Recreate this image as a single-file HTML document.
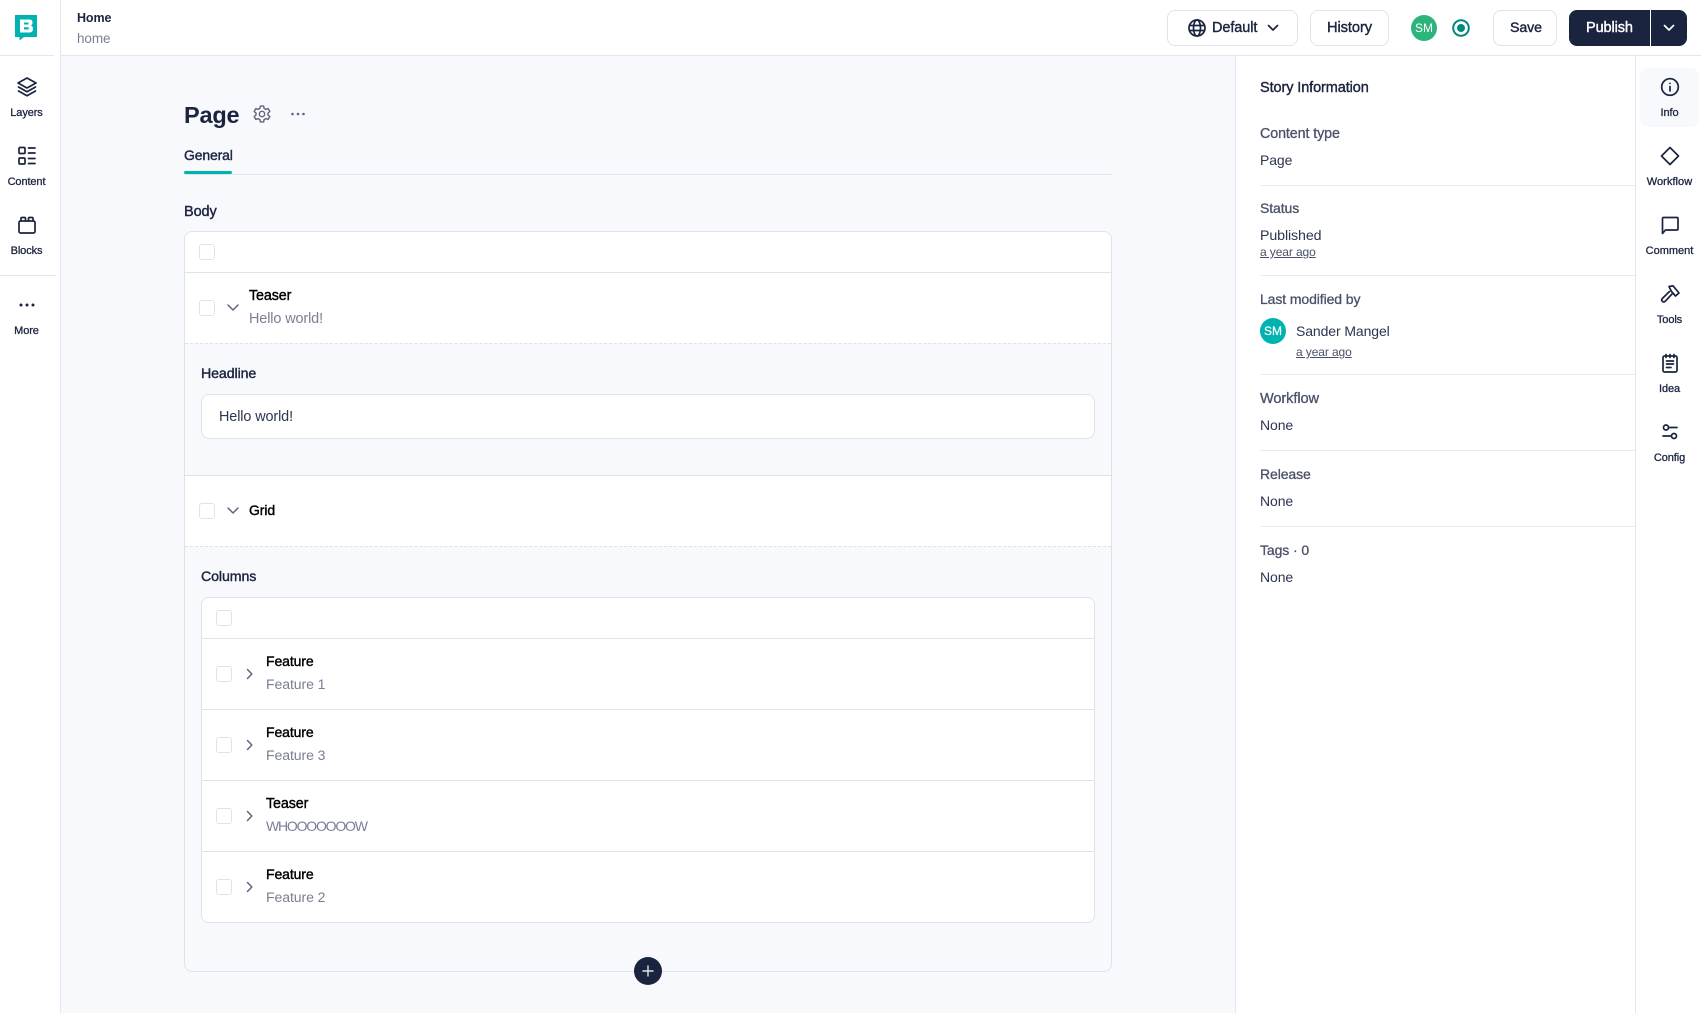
<!DOCTYPE html>
<html><head><meta charset="utf-8"><style>
*{box-sizing:border-box}
html,body{margin:0;padding:0;width:1701px;height:1013px;overflow:hidden;background:#fff}
body{font-family:"Liberation Sans",sans-serif;color:#1b243f;position:relative;font-size:14px}
.a{position:absolute}
.t{position:absolute;line-height:20px;white-space:nowrap;letter-spacing:-.1px}
.m{-webkit-text-stroke:.4px currentColor}
.l{font-size:11px;text-align:center;width:60px;-webkit-text-stroke:.3px currentColor;letter-spacing:-.1px}
.g{color:#7a7f95;font-size:14.3px}
.d{color:#4b5068}
.k{color:#000}
.cb{position:absolute;width:16px;height:16px;border:1px solid #dfe3e8;border-radius:3px;background:#fff}
.hl{position:absolute;height:1px;background:#dfe3e8}
.btn{position:absolute;top:10px;height:36px;border:1px solid #dfe3e8;border-radius:8px;background:#fff}
svg{position:absolute;overflow:visible}
.ic{fill:none;stroke:#1b243f;stroke-width:1.7;stroke-linecap:round;stroke-linejoin:round}
.ch{fill:none;stroke:#5f6580;stroke-width:1.5;stroke-linecap:round;stroke-linejoin:round}
</style></head><body>
<div class="a" style="left:61px;top:56px;width:1174px;height:957px;background:#f8f9fc"></div>
<div class="a" style="left:60px;top:0;width:1px;height:1013px;background:#e3e6f0"></div>
<div class="a" style="left:60px;top:55px;width:1641px;height:1px;background:#e3e6f0"></div>
<div class="a" style="left:0;top:55px;width:54px;height:1px;background:#e3e6f0"></div>
<div class="a" style="left:0;top:275px;width:56px;height:1px;background:#e3e6f0"></div>
<div class="a" style="left:1235px;top:56px;width:1px;height:957px;background:#e3e6f0"></div>
<div class="a" style="left:1635px;top:56px;width:1px;height:957px;background:#e3e6f0"></div>

<svg style="left:15px;top:15px" width="22" height="26" viewBox="0 0 22 26"><path d="M0 0H22V22H9L4.500 25.500V22H0Z" fill="#00b3b0"/><path d="M5 4.500H14.500Q17.500 4.500 17.500 7.500Q17.500 9.800 15.800 10.500Q18 11.200 18 13.800Q18 17.500 14.500 17.500H5Z" fill="#fff"/><path d="M9 7.500H13.500V9.500H9ZM9 12.300H13.700V14.500H9Z" fill="#00b3b0"/></svg>

<svg class="ic" style="left:16px;top:76px" width="22" height="22" viewBox="0 0 22 22"><path d="M11 2 20 7 11 12 2 7Z"/><path d="M2.500 11 11 15.800 19.500 11"/><path d="M2.500 15 11 19.800 19.500 15"/></svg>
<div class="t l" style="left:-3.500px;top:103px">Layers</div>
<svg class="ic" style="left:16px;top:145px" width="22" height="22" viewBox="0 0 22 22"><rect x="3" y="2.500" width="6" height="6" rx="1"/><rect x="3" y="13" width="6" height="6" rx="1"/><path d="M12.500 3H19M12.500 8H19M12.500 13.500H19M12.500 18.500H19"/></svg>
<div class="t l" style="left:-3.500px;top:172px">Content</div>
<svg class="ic" style="left:16px;top:214px" width="22" height="22" viewBox="0 0 22 22"><rect x="3" y="7" width="16" height="12" rx="1.500"/><path d="M5 7V4.500Q5 3.500 6 3.500H8.500Q9.500 3.500 9.500 4.500V7M12.500 7V4.500Q12.500 3.500 13.500 3.500H16Q17 3.500 17 4.500V7"/></svg>
<div class="t l" style="left:-3.500px;top:241px">Blocks</div>
<svg style="left:16px;top:300px" width="22" height="10" viewBox="0 0 22 10"><circle cx="5" cy="5" r="1.500" fill="#1b243f"/><circle cx="11" cy="5" r="1.500" fill="#1b243f"/><circle cx="17" cy="5" r="1.500" fill="#1b243f"/></svg>
<div class="t l" style="left:-3.500px;top:321px">More</div>

<div class="t" style="left:77px;top:8px;font-size:12.500px;font-weight:700;letter-spacing:-.1px">Home</div>
<div class="t g" style="left:77px;top:28.500px;font-size:13.500px">home</div>

<div class="btn" style="left:1167px;width:131px"></div>
<svg class="ic" style="left:1187px;top:18px" width="20" height="20" viewBox="0 0 20 20" stroke-width="1.500"><circle cx="10" cy="10" r="8"/><ellipse cx="10" cy="10" rx="3.500" ry="8"/><path d="M2.500 7.500H17.500M2.500 12.500H17.500"/></svg>
<div class="t m" style="left:1212px;top:17.500px;font-size:14.500px">Default</div>
<svg class="ic" style="left:1266px;top:23px" width="14" height="10" viewBox="0 0 14 10"><path d="M2.500 2.500 7 7 11.500 2.500"/></svg>
<div class="btn" style="left:1310px;width:79px"></div>
<div class="t m" style="left:1327px;top:17.500px;font-size:14.700px">History</div>
<div class="a" style="left:1411px;top:15px;width:26px;height:26px;border-radius:50%;background:#2db47d;color:#fff;font-size:12px;line-height:27px;text-align:center">SM</div>
<svg style="left:1451px;top:18px" width="20" height="20" viewBox="0 0 20 20"><circle cx="10" cy="10" r="7.800" fill="none" stroke="#00897f" stroke-width="2"/><circle cx="10" cy="10" r="4" fill="#00897f"/></svg>
<div class="btn" style="left:1493px;width:64px"></div>
<div class="t m" style="left:1510px;top:17.500px;font-size:14.200px">Save</div>
<div class="a" style="left:1569px;top:10px;width:118px;height:36px;border-radius:8px;background:#1b243f"></div>
<div class="a" style="left:1650px;top:10px;width:1px;height:36px;background:#fff"></div>
<div class="t m" style="left:1586px;top:17.500px;font-size:14.500px;color:#fff">Publish</div>
<svg style="left:1662px;top:23px" width="14" height="10" viewBox="0 0 14 10"><path d="M2.500 2.500 7 7 11.500 2.500" fill="none" stroke="#fff" stroke-width="1.700" stroke-linecap="round" stroke-linejoin="round"/></svg>

<div class="t" style="left:184px;top:102px;font-size:23.500px;line-height:26px;font-weight:700;letter-spacing:-.2px">Page</div>
<svg style="left:252px;top:104px" width="20" height="20" viewBox="0 0 24 24" fill="none" stroke="#5f6580" stroke-width="1.700" stroke-linejoin="round"><path d="M10 2.500H14L14.500 5.300 16.700 6.500 19.400 5.500 21.400 9 19.200 10.800V13.200L21.400 15 19.400 18.500 16.700 17.500 14.500 18.700 14 21.500H10L9.500 18.700 7.300 17.500 4.600 18.500 2.600 15 4.800 13.200V10.800L2.600 9 4.600 5.500 7.300 6.500 9.500 5.300Z"/><circle cx="12" cy="12" r="3.200"/></svg>
<svg style="left:290px;top:109px" width="16" height="10" viewBox="0 0 16 10"><circle cx="2.500" cy="5" r="1.300" fill="#5f6580"/><circle cx="8" cy="5" r="1.300" fill="#5f6580"/><circle cx="13.500" cy="5" r="1.300" fill="#5f6580"/></svg>
<div class="t m" style="left:184px;top:145px;font-size:14px;letter-spacing:-.15px">General</div>
<div class="hl" style="left:184px;top:174px;width:928px"></div>
<div class="a" style="left:184px;top:171px;width:48px;height:3px;background:#00b3b0;border-radius:2px"></div>
<div class="t m" style="left:184px;top:202px;font-size:14.500px">Body</div>

<div class="a" style="left:184px;top:231px;width:928px;height:741px;border:1px solid #dfe3e8;border-radius:8px"></div>
<div class="a" style="left:185px;top:232px;width:926px;height:111px;background:#fff;border-radius:7px 7px 0 0"></div>
<div class="a" style="left:185px;top:475px;width:926px;height:71px;background:#fff"></div>
<div class="hl" style="left:185px;top:272px;width:926px"></div>
<div class="a" style="left:185px;top:343px;width:926px;height:0;border-top:1px dashed #dfe3e8"></div>
<div class="hl" style="left:185px;top:475px;width:926px"></div>
<div class="a" style="left:185px;top:546px;width:926px;height:0;border-top:1px dashed #dfe3e8"></div>

<div class="cb" style="left:199px;top:244px"></div>
<div class="cb" style="left:199px;top:300px"></div>
<svg class="ch" style="left:226px;top:303px" width="14" height="10" viewBox="0 0 14 10"><path d="M2 2 7 7 12 2"/></svg>
<div class="t m k" style="left:249px;top:286px;font-size:14.300px">Teaser</div>
<div class="t g" style="left:249px;top:309px;font-size:14.400px">Hello world!</div>
<div class="t m" style="left:201px;top:364px;font-size:14.200px">Headline</div>
<div class="a" style="left:201px;top:394px;width:894px;height:45px;border:1px solid #dfe3e8;border-radius:8px;background:#fff"></div>
<div class="t" style="left:219px;top:407px;color:#2d3450;font-size:14.400px">Hello world!</div>

<div class="cb" style="left:199px;top:503px"></div>
<svg class="ch" style="left:226px;top:506px" width="14" height="10" viewBox="0 0 14 10"><path d="M2 2 7 7 12 2"/></svg>
<div class="t m k" style="left:249px;top:500px">Grid</div>
<div class="t m" style="left:201px;top:567px;font-size:14.200px">Columns</div>

<div class="a" style="left:201px;top:597px;width:894px;height:326px;border:1px solid #dfe3e8;border-radius:8px;background:#fff"></div>
<div class="hl" style="left:202px;top:638px;width:892px"></div>
<div class="hl" style="left:202px;top:709px;width:892px"></div>
<div class="hl" style="left:202px;top:780px;width:892px"></div>
<div class="hl" style="left:202px;top:851px;width:892px"></div>
<div class="cb" style="left:216px;top:610px"></div>

<div class="cb" style="left:216px;top:666px"></div>
<svg class="ch" style="left:245px;top:667px" width="10" height="14" viewBox="0 0 10 14"><path d="M2.500 2.500 6.800 7 2.500 11.500"/></svg>
<div class="t m k" style="left:266px;top:651px">Feature</div>
<div class="t g" style="left:266px;top:674px;font-size:14.100px">Feature 1</div>

<div class="cb" style="left:216px;top:737px"></div>
<svg class="ch" style="left:245px;top:738px" width="10" height="14" viewBox="0 0 10 14"><path d="M2.500 2.500 6.800 7 2.500 11.500"/></svg>
<div class="t m k" style="left:266px;top:722px">Feature</div>
<div class="t g" style="left:266px;top:745px;font-size:14.100px">Feature 3</div>

<div class="cb" style="left:216px;top:808px"></div>
<svg class="ch" style="left:245px;top:809px" width="10" height="14" viewBox="0 0 10 14"><path d="M2.500 2.500 6.800 7 2.500 11.500"/></svg>
<div class="t m k" style="left:266px;top:794px;font-size:14.300px">Teaser</div>
<div class="t g" style="left:266px;top:816px;font-size:14px;letter-spacing:-1.200px">WHOOOOOOOW</div>

<div class="cb" style="left:216px;top:879px"></div>
<svg class="ch" style="left:245px;top:880px" width="10" height="14" viewBox="0 0 10 14"><path d="M2.500 2.500 6.800 7 2.500 11.500"/></svg>
<div class="t m k" style="left:266px;top:864px">Feature</div>
<div class="t g" style="left:266px;top:887px;font-size:14.100px">Feature 2</div>

<div class="a" style="left:634px;top:957px;width:28px;height:28px;border-radius:50%;background:#1b243f"></div>
<svg style="left:634px;top:957px" width="28" height="28" viewBox="0 0 28 28"><path d="M14 8.500V19.500M8.500 14H19.500" stroke="#dfe3e8" stroke-width="1.400"/></svg>

<div class="t m" style="left:1260px;top:78px;font-size:14.500px">Story Information</div>
<div class="t d m" style="left:1260px;top:124px;font-size:14.300px;-webkit-text-stroke-width:.3px">Content type</div>
<div class="t" style="left:1260px;top:150px;color:#2d3450">Page</div>
<div class="hl" style="left:1260px;top:185px;width:375px;background:#e9ebf0"></div>
<div class="t d m" style="left:1260px;top:198px;-webkit-text-stroke-width:.3px">Status</div>
<div class="t" style="left:1260px;top:226px;color:#2d3450;font-size:14.200px">Published</div>
<div class="t d" style="left:1260px;top:242px;font-size:12px;text-decoration:underline">a year ago</div>
<div class="hl" style="left:1260px;top:275px;width:375px;background:#e9ebf0"></div>
<div class="t d m" style="left:1260px;top:289px;-webkit-text-stroke-width:.3px">Last modified by</div>
<div class="a" style="left:1260px;top:318px;width:26px;height:26px;border-radius:50%;background:#00b3b0;color:#fff;font-size:12px;line-height:27px;text-align:center;-webkit-text-stroke:.2px #fff">SM</div>
<div class="t" style="left:1296px;top:321px;color:#2d3450">Sander Mangel</div>
<div class="t d" style="left:1296px;top:342px;font-size:12px;text-decoration:underline">a year ago</div>
<div class="hl" style="left:1260px;top:374px;width:375px;background:#e9ebf0"></div>
<div class="t d m" style="left:1260px;top:389px;font-size:14.600px;-webkit-text-stroke-width:.3px">Workflow</div>
<div class="t" style="left:1260px;top:415px;color:#2d3450">None</div>
<div class="hl" style="left:1260px;top:450px;width:375px;background:#e9ebf0"></div>
<div class="t d m" style="left:1260px;top:464px;-webkit-text-stroke-width:.3px">Release</div>
<div class="t" style="left:1260px;top:491px;color:#2d3450">None</div>
<div class="hl" style="left:1260px;top:526px;width:375px;background:#e9ebf0"></div>
<div class="t d m" style="left:1260px;top:540px;-webkit-text-stroke-width:.3px">Tags · 0</div>
<div class="t" style="left:1260px;top:567px;color:#2d3450">None</div>

<div class="a" style="left:1640px;top:68px;width:59px;height:59px;border-radius:8px;background:#f8f9fc"></div>
<svg class="ic" style="left:1660px;top:77px" width="20" height="20" viewBox="0 0 20 20"><circle cx="10" cy="10" r="8.300"/><path d="M10 9.500V14M10 6.300V6.400"/></svg>
<div class="t l" style="left:1639.500px;top:103px">Info</div>
<svg class="ic" style="left:1660px;top:146px" width="20" height="20" viewBox="0 0 20 20"><path d="M10 1.500 18.500 10 10 18.500 1.500 10Z"/></svg>
<div class="t l" style="left:1639.500px;top:172px;letter-spacing:.05px">Workflow</div>
<svg class="ic" style="left:1660px;top:215px" width="20" height="20" viewBox="0 0 20 20"><path d="M2.500 18.500V3.500Q2.500 2.500 3.500 2.500H17Q18 2.500 18 3.500V14Q18 15 17 15H5.500Z"/></svg>
<div class="t l" style="left:1639.500px;top:240.500px;letter-spacing:0">Comment</div>
<svg class="ic" style="left:1660px;top:284px" width="20" height="20" viewBox="0 0 20 20"><path d="M9 2.500 13 1.800 19 9 15.500 12 11.500 7.500Z"/><path d="M9.500 7.500 2.300 14.500Q1 16 2.300 17.300 3.700 18.700 5.200 17.300L12 10"/></svg>
<div class="t l" style="left:1639.500px;top:310px">Tools</div>
<svg class="ic" style="left:1660px;top:353px" width="20" height="20" viewBox="0 0 20 20"><rect x="3" y="3" width="14" height="16" rx="1.500"/><path d="M6 1.500V4.500M10 1.500V4.500M14 1.500V4.500M6.500 8H13.500M6.500 11H13.500M6.500 14.500H11"/></svg>
<div class="t l" style="left:1639.500px;top:379px">Idea</div>
<svg class="ic" style="left:1660px;top:422px" width="20" height="20" viewBox="0 0 20 20"><circle cx="6" cy="5.500" r="2.500"/><path d="M8.500 5.500H17"/><circle cx="14" cy="14" r="2.500"/><path d="M3 14H11.500"/></svg>
<div class="t l" style="left:1639.500px;top:448px">Config</div>
</body></html>
